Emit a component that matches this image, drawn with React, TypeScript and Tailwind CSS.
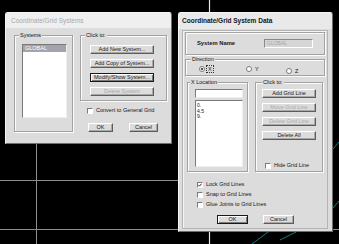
import clsx from "clsx";
import type { ReactNode } from "react";

const font = "font-['Liberation_Sans',Arial,sans-serif]";

function Btn({
  label,
  className,
  disabled,
  focus,
}: {
  label: string;
  className?: string;
  disabled?: boolean;
  focus?: boolean;
}) {
  return (
    <div
      className={clsx(
        "flex h-[9px] shrink-0 items-center justify-center border bg-[#dcdcdc] text-[5.5px] leading-none",
        focus
          ? "border-[#1a1a1a] shadow-[inset_1px_1px_0_#fff,inset_-1px_-1px_0_#7a7a7a]"
          : "border-t-white border-l-white border-r-[#5c5c5c] border-b-[#5c5c5c] shadow-[inset_-1px_-1px_0_#a8a8a8]",
        disabled ? "text-[#a9a9a9]" : "text-[#161616]",
        className
      )}
    >
      {label}
    </div>
  );
}

function Group({
  label,
  className,
  labelClass = "left-[4px]",
  children,
}: {
  label?: string;
  className?: string;
  labelClass?: string;
  children?: ReactNode;
}) {
  return (
    <div
      className={clsx(
        "relative border border-[#a2a2a2] shadow-[inset_1px_1px_0_#fbfbfb,1px_1px_0_#fbfbfb]",
        className
      )}
    >
      {label && (
        <span
          className={clsx(
            "absolute top-[-4px] bg-[#dcdcdc] px-[1px] text-[5.5px] leading-[7px] text-[#161616]",
            labelClass
          )}
        >
          {label}
        </span>
      )}
      {children}
    </div>
  );
}

function Check({ label, checked }: { label: string; checked?: boolean }) {
  return (
    <div className="flex h-[7px] items-center gap-[3px]">
      <span className="flex h-[6px] w-[6px] items-center justify-center border border-t-[#7a7a7a] border-l-[#7a7a7a] border-r-white border-b-white bg-white">
        {checked && (
          <svg width="4" height="4" viewBox="0 0 4 4">
            <path d="M0.4 1.9 L1.5 3.1 L3.6 0.7" fill="none" stroke="#111" strokeWidth="0.9" />
          </svg>
        )}
      </span>
      <span className="text-[5.5px] leading-[7px] text-[#161616]">{label}</span>
    </div>
  );
}

function Radio({ label, on, focus }: { label: string; on?: boolean; focus?: boolean }) {
  return (
    <div className="flex items-center gap-[2px]">
      <span className="flex h-[6px] w-[6px] items-center justify-center rounded-full border border-[#7a7a7a] bg-white">
        {on && <span className="h-[2px] w-[2px] rounded-full bg-[#111]" />}
      </span>
      <span
        className={clsx(
          "px-[1px] text-[5.5px] leading-[6px] text-[#161616]",
          focus && "outline outline-1 outline-dotted outline-[#333]"
        )}
      >
        {label}
      </span>
    </div>
  );
}

function Systems() {
  return (
    <div className="absolute left-[5px] top-[12px] flex h-[132px] w-[167px] flex-col overflow-hidden rounded-t-[3px] border border-t-[#f6f6f6] border-l-[#f6f6f6] border-r-[#6e6e6e] border-b-[#6e6e6e] bg-[#dcdcdc]">
      <div className="flex h-[15px] items-center bg-[#efefef] pl-[5px] text-[6.5px] text-[#a8a8a8]">
        Coordinate/Grid Systems
      </div>
      <div className="flex pl-[8px] pt-[7px]">
        <Group label="Systems" className="h-[97px] w-[59px] pl-[7px] pt-[8px]">
          <div className="h-[74px] w-[45px] border border-t-[#7a7a7a] border-l-[#7a7a7a] border-r-[#eeeeee] border-b-[#eeeeee] bg-white">
            <div className="h-[7px] bg-[#a3a3ab] pl-[2px] text-[5.5px] leading-[7px] text-white">GLOBAL</div>
          </div>
        </Group>
        <div className="ml-[7px] flex w-[87px] flex-col">
          <Group label="Click to:" className="flex h-[66px] flex-col gap-[5px] pl-[9px] pt-[9px]">
            <Btn label="Add New System..." className="w-[64px]" />
            <Btn label="Add Copy of System..." className="w-[64px]" />
            <Btn label="Modify/Show System..." className="w-[64px]" focus />
            <Btn label="Delete System" className="w-[64px]" disabled />
          </Group>
          <div className="mt-[6px] pl-[7px]">
            <Check label="Convert to General Grid" />
          </div>
          <div className="mt-[9px] flex gap-[16px] pl-[8px]">
            <Btn label="OK" className="w-[25px]" />
            <Btn label="Cancel" className="w-[29px]" />
          </div>
        </div>
      </div>
    </div>
  );
}

function GridData() {
  return (
    <div className="absolute left-[178px] top-[12px] flex h-[220px] w-[155px] flex-col overflow-hidden rounded-t-[3px] border border-t-[#f6f6f6] border-l-[#f6f6f6] border-r-[#6e6e6e] border-b-[#6e6e6e] bg-[#dcdcdc]">
      <div className="flex h-[16px] items-center bg-[#e9e9e9] pl-[3px] text-[6.5px] font-bold text-[#141414]">
        Coordinate/Grid System Data
      </div>
      <div className="ml-[3px] mt-[1px] h-[199px] w-[146px] border border-[#b4b4b4] shadow-[inset_1px_1px_0_#f4f4f4]">
        <Group className="mx-[2px] mt-[1px] flex h-[23px] items-center pl-[11px] pr-[11px]">
          <span className="text-[5.8px] font-bold text-[#161616]">System Name</span>
          <div className="ml-auto flex h-[9px] w-[49px] items-center border border-t-[#8a8a8a] border-l-[#8a8a8a] border-r-white border-b-white bg-[#d6d6d6] pl-[2px] text-[5px] text-[#a4a4a4]">
            GLOBAL
          </div>
        </Group>
        <Group
          label="Direction"
          labelClass="left-[5px]"
          className="mx-[2px] mt-[4px] flex h-[17px] pl-[13px] pt-[6px]"
        >
          <div className="w-[47px]">
            <Radio label="X" on focus />
          </div>
          <div className="w-[40px]">
            <Radio label="Y" />
          </div>
          <Radio label="Z" />
        </Group>
        <div className="mt-[6px] flex pl-[4px]">
          <Group label="X Location" labelClass="left-[2px]" className="h-[90px] w-[61px] pl-[7px] pt-[6px]">
            <div className="h-[9px] w-[48px] border border-t-[#7a7a7a] border-l-[#7a7a7a] border-r-[#eeeeee] border-b-[#eeeeee] bg-white" />
            <div className="mt-[2px] h-[67px] w-[48px] border border-t-[#7a7a7a] border-l-[#7a7a7a] border-r-[#eeeeee] border-b-[#eeeeee] bg-white pl-[1px] pt-[2px] text-[5px] leading-[5.5px] text-[#161616]">
              <div>0.</div>
              <div>4.5</div>
              <div>9.</div>
            </div>
          </Group>
          <Group
            label="Click to:"
            labelClass="left-[6px]"
            className="ml-[7px] flex h-[90px] w-[68px] flex-col gap-[5px] pl-[6px] pt-[6px]"
          >
            <Btn label="Add Grid Line" className="w-[54px]" />
            <Btn label="Move Grid Line" className="w-[54px]" disabled />
            <Btn label="Delete Grid Line" className="w-[54px]" disabled />
            <Btn label="Delete All" className="w-[54px]" />
            <div className="ml-[3px] mt-[17px]">
              <Check label="Hide Grid Line" />
            </div>
          </Group>
        </div>
        <div className="mt-[9px] flex flex-col gap-[3px] pl-[14px]">
          <Check label="Lock Grid Lines" checked />
          <Check label="Snap to Grid Lines" />
          <Check label="Glue Joints to Grid Lines" />
        </div>
        <div className="mt-[7px] flex gap-[15px] pl-[34px]">
          <Btn label="OK" className="w-[31px]" focus />
          <Btn label="Cancel" className="w-[31px]" />
        </div>
      </div>
    </div>
  );
}

export default function App() {
  return (
    <div className={clsx("relative h-[244px] w-[339px] overflow-hidden bg-black", font)}>
      <svg className="absolute inset-0" width="339" height="244" viewBox="0 0 339 244">
        <g stroke="#8c8c8c" strokeWidth="1">
          <line x1="36.5" y1="144" x2="36.5" y2="244" />
          <line x1="0" y1="180.5" x2="178" y2="180.5" />
          <line x1="0" y1="229.5" x2="178" y2="229.5" />
          <line x1="333" y1="229.5" x2="339" y2="229.5" />
        </g>
        <g stroke="#e6e6e6" strokeWidth="1.2">
          <line x1="209.5" y1="0" x2="209.5" y2="12" />
          <line x1="209.5" y1="232" x2="209.5" y2="244" />
        </g>
        <g stroke="#1c9c9c" strokeWidth="0.8">
          <line x1="252" y1="244" x2="268" y2="232" />
          <line x1="280" y1="240" x2="296" y2="232" />
          <line x1="333" y1="149" x2="339" y2="142" />
          <line x1="333" y1="208" x2="339" y2="201" />
        </g>
      </svg>
      <Systems />
      <GridData />
    </div>
  );
}
